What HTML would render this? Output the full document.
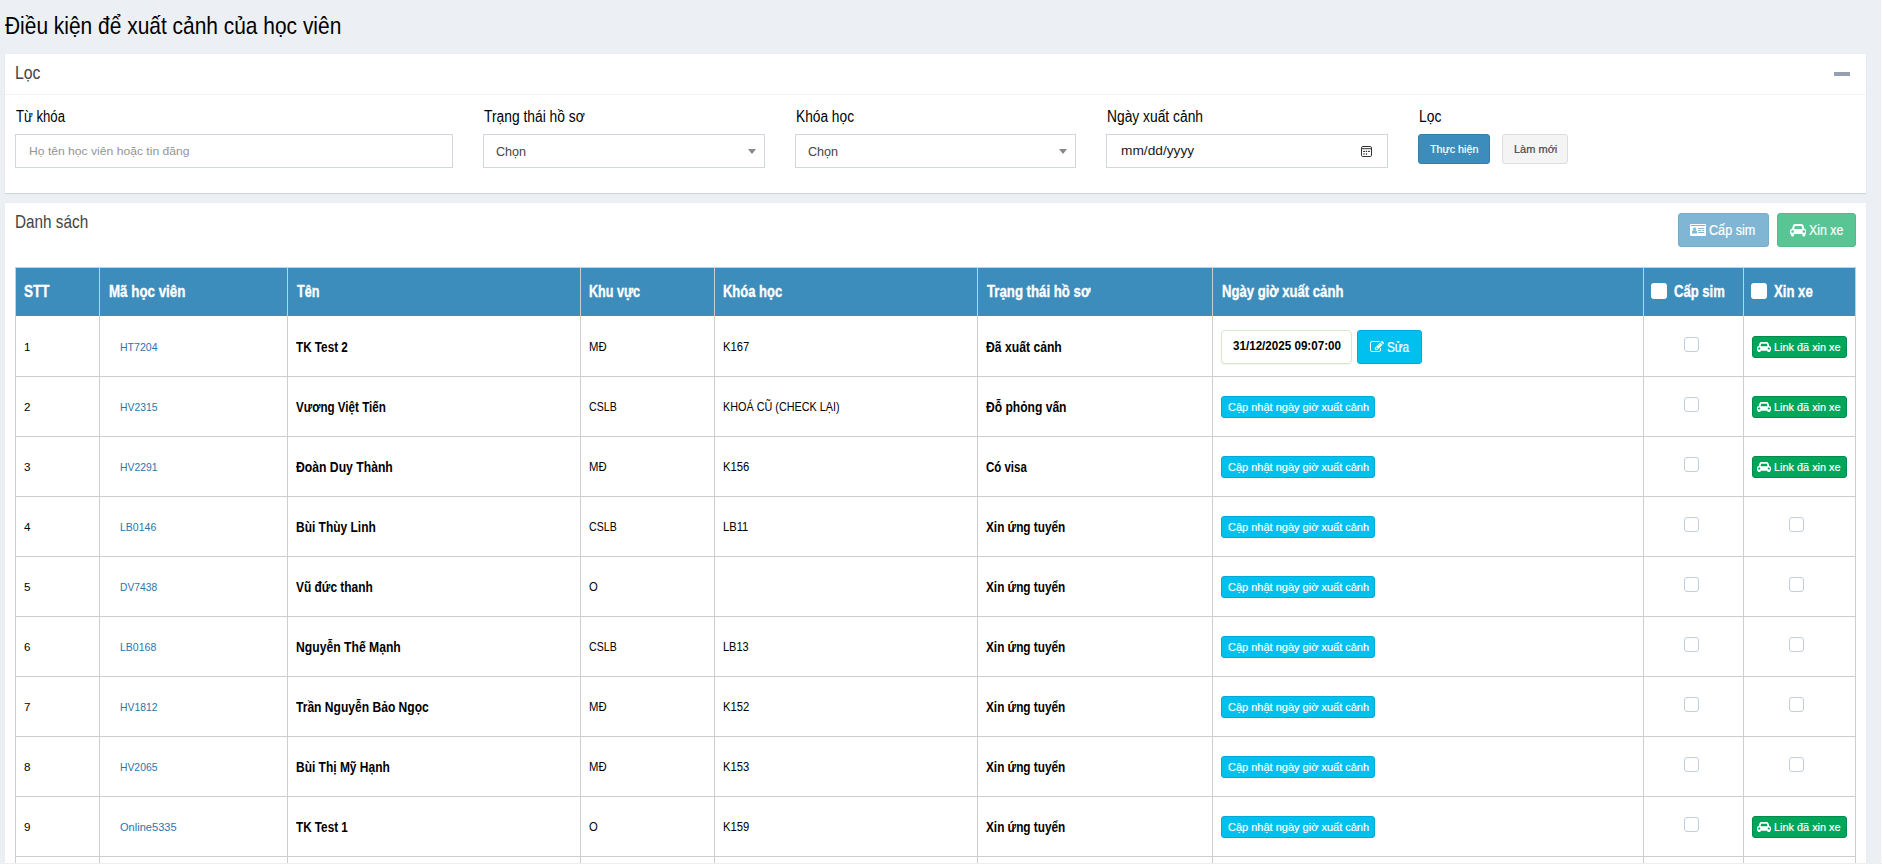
<!DOCTYPE html>
<html lang="vi"><head><meta charset="utf-8"><title>Điều kiện để xuất cảnh của học viên</title>
<style>
html,body{margin:0;padding:0}
body{width:1882px;height:864px;overflow:hidden;position:relative;background:#ecf0f5;font-family:"Liberation Sans", sans-serif}
.r{position:absolute;display:block}
.th{-webkit-text-stroke:.35px #fff}
.sb,.b14,.btn{-webkit-text-stroke:.2px currentColor}
.t{position:absolute;display:inline-block;white-space:nowrap;line-height:1;transform-origin:0 50%;font-family:"Liberation Sans", sans-serif}
</style></head>
<body>
<span id="t1" class="t h1" style="left:5.20px;top:14px;font-size:24.8px;color:#000;transform:scaleX(0.8441);">Điều kiện để xuất cảnh của học viên</span>
<div class="r" style="left:5px;top:54px;width:1861px;height:139px;background:#fff;box-shadow:0 1px 1px rgba(0,0,0,.1),0 0 1px rgba(0,0,0,.04);"></div>
<div class="r" style="left:5px;top:94px;width:1861px;height:1px;background:#f4f4f4;"></div>
<span id="t2" class="t bt" style="left:15.00px;top:64px;font-size:18.6px;color:#444;transform:scaleX(0.8504);">Lọc</span>
<div class="r" style="left:1834px;top:72px;width:16px;height:4px;background:#97a0b3;"></div>
<span id="t3" class="t lb" style="left:16.00px;top:109px;font-size:16.0px;color:#000;transform:scaleX(0.8218);">Từ khóa</span>
<span id="t4" class="t lb" style="left:484.00px;top:109px;font-size:16.0px;color:#000;transform:scaleX(0.8643);">Trạng thái hồ sơ</span>
<span id="t5" class="t lb" style="left:795.60px;top:109px;font-size:16.0px;color:#000;transform:scaleX(0.8579);">Khóa học</span>
<span id="t6" class="t lb" style="left:1107.00px;top:109px;font-size:16.0px;color:#000;transform:scaleX(0.8634);">Ngày xuất cảnh</span>
<span id="t7" class="t lb" style="left:1418.90px;top:109px;font-size:16.0px;color:#000;transform:scaleX(0.8644);">Lọc</span>
<div class="r" style="left:15px;top:134px;width:438px;height:34px;background:#fff;box-sizing:border-box;border:1px solid #d2d6de;"></div>
<div class="r" style="left:483px;top:134px;width:282px;height:34px;background:#fff;box-sizing:border-box;border:1px solid #d2d6de;"></div>
<div class="r" style="left:795px;top:134px;width:281px;height:34px;background:#fff;box-sizing:border-box;border:1px solid #d2d6de;"></div>
<div class="r" style="left:1106px;top:134px;width:282px;height:34px;background:#fff;box-sizing:border-box;border:1px solid #d2d6de;"></div>
<span id="t8" class="t ph" style="left:28.50px;top:146px;font-size:11.8px;color:#949494;transform:scaleX(1.0282);">Họ tên học viên hoặc tin đăng</span>
<span id="t9" class="t sel" style="left:496.00px;top:145px;font-size:13.4px;color:#444;transform:scaleX(0.9402);">Chọn</span>
<span id="t10" class="t sel" style="left:808.00px;top:145px;font-size:13.4px;color:#444;transform:scaleX(0.9402);">Chọn</span>
<div class="r" style="left:747.5px;top:149px;width:0;height:0;border-style:solid;border-width:5px 4.25px 0 4.25px;border-color:#888 transparent transparent transparent"></div>
<div class="r" style="left:1059px;top:149px;width:0;height:0;border-style:solid;border-width:5px 4.25px 0 4.25px;border-color:#888 transparent transparent transparent"></div>
<span id="t11" class="t dt" style="left:1120.60px;top:145px;font-size:12.4px;color:#1a1a1a;transform:scaleX(1.1060);">mm/dd/yyyy</span>
<svg class="r" style="left:1361px;top:146px" width="11" height="11" viewBox="0 0 11 11"><rect x=".5" y=".5" width="10" height="10" rx="1.3" fill="none" stroke="#333" stroke-width="1"/><rect x=".5" y="2.2" width="10" height="1" fill="#333"/><g fill="#222"><rect x="2.1" y="4.9" width="1.9" height="1"/><rect x="4.8" y="4.8" width="1.3" height="1.2"/><rect x="7" y="4.9" width="1.9" height="1"/><rect x="2.2" y="7.2" width="1.6" height="1.6" fill="#777"/><rect x="4.9" y="7.2" width="1.2" height="1.6" fill="#444"/></g></svg>
<div class="r" style="left:1418px;top:134px;width:72px;height:30px;background:#3c8dbc;box-sizing:border-box;border:1px solid #367fa9;border-radius:3px;"></div>
<span id="t12" class="t btn" style="left:1430.00px;top:144px;font-size:11.8px;color:#fff;transform:scaleX(0.9105);">Thực hiện</span>
<div class="r" style="left:1502px;top:134px;width:66px;height:30px;background:#f4f4f4;box-sizing:border-box;border:1px solid #ddd;border-radius:3px;"></div>
<span id="t13" class="t btn" style="left:1513.70px;top:144px;font-size:11.8px;color:#444;transform:scaleX(0.9327);">Làm mới</span>
<div class="r" style="left:5px;top:203px;width:1861px;height:700px;background:#fff;box-shadow:0 0 1px rgba(0,0,0,.05);"></div>
<span id="t14" class="t bt" style="left:15.30px;top:213px;font-size:18.6px;color:#444;transform:scaleX(0.8233);">Danh sách</span>
<div class="r" style="left:1678px;top:213px;width:91px;height:34px;background:#80b5d3;box-sizing:border-box;border:1px solid #78acca;border-radius:3px;"></div>
<svg class="r" style="left:1690.30px;top:224.00px" width="16.20" height="12.00" viewBox="0 -1408 2048 1536" preserveAspectRatio="none"><path transform="scale(1,-1)" fill="#fff" d="M896 324C896 251 848 192 789 192H363C304 192 256 251 256 324C256 456 288 608 420 608C460 568 515 544 576 544C637 544 692 568 732 608C864 608 896 456 896 324ZM768 768C768 662 682 576 576 576C470 576 384 662 384 768C384 874 470 960 576 960C682 960 768 874 768 768ZM1792 288C1792 270 1778 256 1760 256H1056C1038 256 1024 270 1024 288V352C1024 370 1038 384 1056 384H1760C1778 384 1792 370 1792 352V288ZM1408 544C1408 526 1394 512 1376 512H1056C1038 512 1024 526 1024 544V608C1024 626 1038 640 1056 640H1376C1394 640 1408 626 1408 608V544ZM1792 544C1792 526 1778 512 1760 512H1568C1550 512 1536 526 1536 544V608C1536 626 1550 640 1568 640H1760C1778 640 1792 626 1792 608V544ZM1792 800C1792 782 1778 768 1760 768H1056C1038 768 1024 782 1024 800V864C1024 882 1038 896 1056 896H1760C1778 896 1792 882 1792 864V800ZM128 1152V1248C128 1266 142 1280 160 1280H1888C1906 1280 1920 1266 1920 1248V1152ZM2048 1248C2048 1336 1976 1408 1888 1408H160C72 1408 0 1336 0 1248V32C0 -56 72 -128 160 -128H1888C1976 -128 2048 -56 2048 32Z"/></svg>
<span id="t15" class="t b14" style="left:1709.40px;top:223px;font-size:14.0px;color:#fff;transform:scaleX(0.9015);">Cấp sim</span>
<div class="r" style="left:1777px;top:213px;width:79px;height:34px;background:#59c594;box-sizing:border-box;border:1px solid #55b98b;border-radius:3px;"></div>
<svg class="r" style="left:1789.60px;top:224.20px" width="16.40" height="12.60" viewBox="0 -1408 2048 1600" preserveAspectRatio="none"><path transform="scale(1,-1)" fill="#fff" d="M480 448C480 360 408 288 320 288C232 288 160 360 160 448C160 536 232 608 320 608C408 608 480 536 480 448ZM516 768 605 1125C608 1136 628 1152 640 1152H1408C1420 1152 1440 1136 1443 1125L1532 768ZM1888 448C1888 360 1816 288 1728 288C1640 288 1568 360 1568 448C1568 536 1640 608 1728 608C1816 608 1888 536 1888 448ZM2048 544C2048 668 1948 768 1824 768H1796L1691 1187C1660 1313 1538 1408 1408 1408H640C510 1408 388 1313 357 1187L252 768H224C100 768 0 668 0 544V160C0 142 14 128 32 128H128V0C128 -106 214 -192 320 -192C426 -192 512 -106 512 0V128H1536V0C1536 -106 1622 -192 1728 -192C1834 -192 1920 -106 1920 0V128H2016C2034 128 2048 142 2048 160Z"/></svg>
<span id="t16" class="t b14" style="left:1808.60px;top:223px;font-size:14.0px;color:#fff;transform:scaleX(0.8838);">Xin xe</span>
<div class="r" style="left:15px;top:267px;width:1841px;height:1px;background:#cdcdcd;"></div>
<div class="r" style="left:16px;top:268px;width:1839px;height:48px;background:#3c8dbc;"></div>
<div class="r" style="left:15px;top:376px;width:1841px;height:1px;background:#cdcdcd;"></div>
<div class="r" style="left:15px;top:436px;width:1841px;height:1px;background:#cdcdcd;"></div>
<div class="r" style="left:15px;top:496px;width:1841px;height:1px;background:#cdcdcd;"></div>
<div class="r" style="left:15px;top:556px;width:1841px;height:1px;background:#cdcdcd;"></div>
<div class="r" style="left:15px;top:616px;width:1841px;height:1px;background:#cdcdcd;"></div>
<div class="r" style="left:15px;top:676px;width:1841px;height:1px;background:#cdcdcd;"></div>
<div class="r" style="left:15px;top:736px;width:1841px;height:1px;background:#cdcdcd;"></div>
<div class="r" style="left:15px;top:796px;width:1841px;height:1px;background:#cdcdcd;"></div>
<div class="r" style="left:15px;top:856px;width:1841px;height:1px;background:#cdcdcd;"></div>
<div class="r" style="left:15px;top:267px;width:1px;height:600px;background:#cdcdcd;"></div>
<div class="r" style="left:99px;top:267px;width:1px;height:600px;background:#cdcdcd;"></div>
<div class="r" style="left:287px;top:267px;width:1px;height:600px;background:#cdcdcd;"></div>
<div class="r" style="left:580px;top:267px;width:1px;height:600px;background:#cdcdcd;"></div>
<div class="r" style="left:714px;top:267px;width:1px;height:600px;background:#cdcdcd;"></div>
<div class="r" style="left:977px;top:267px;width:1px;height:600px;background:#cdcdcd;"></div>
<div class="r" style="left:1212px;top:267px;width:1px;height:600px;background:#cdcdcd;"></div>
<div class="r" style="left:1643px;top:267px;width:1px;height:600px;background:#cdcdcd;"></div>
<div class="r" style="left:1743px;top:267px;width:1px;height:600px;background:#cdcdcd;"></div>
<div class="r" style="left:1855px;top:267px;width:1px;height:600px;background:#cdcdcd;"></div>
<span id="t17" class="t th" style="left:24.00px;top:284px;font-size:15.8px;color:#fff;font-weight:bold;transform:scaleX(0.8511);">STT</span>
<span id="t18" class="t th" style="left:108.60px;top:284px;font-size:15.8px;color:#fff;font-weight:bold;transform:scaleX(0.8449);">Mã học viên</span>
<span id="t19" class="t th" style="left:296.60px;top:284px;font-size:15.8px;color:#fff;font-weight:bold;transform:scaleX(0.7973);">Tên</span>
<span id="t20" class="t th" style="left:589.40px;top:284px;font-size:15.8px;color:#fff;font-weight:bold;transform:scaleX(0.7971);">Khu vực</span>
<span id="t21" class="t th" style="left:722.90px;top:284px;font-size:15.8px;color:#fff;font-weight:bold;transform:scaleX(0.8212);">Khóa học</span>
<span id="t22" class="t th" style="left:986.50px;top:284px;font-size:15.8px;color:#fff;font-weight:bold;transform:scaleX(0.8359);">Trạng thái hồ sơ</span>
<span id="t23" class="t th" style="left:1221.70px;top:284px;font-size:15.8px;color:#fff;font-weight:bold;transform:scaleX(0.8291);">Ngày giờ xuất cảnh</span>
<span id="t24" class="t th" style="left:1673.80px;top:284px;font-size:15.8px;color:#fff;font-weight:bold;transform:scaleX(0.8266);">Cấp sim</span>
<span id="t25" class="t th" style="left:1773.80px;top:284px;font-size:15.8px;color:#fff;font-weight:bold;transform:scaleX(0.8314);">Xin xe</span>
<div class="r" style="left:1651.2px;top:283.3px;width:15.4px;height:15.5px;background:#fff;border-radius:3px;"></div>
<div class="r" style="left:1751.2px;top:283.3px;width:15.4px;height:15.5px;background:#fff;border-radius:3px;"></div>
<span id="t26" class="t tn" style="left:24.00px;top:341px;font-size:11.6px;color:#000;">1</span>
<span id="t27" class="t lk" style="left:119.60px;top:341px;font-size:11.6px;color:#2c74a8;transform:scaleX(0.9091);">HT7204</span>
<span id="t28" class="t nm" style="left:296.20px;top:340px;font-size:14.0px;color:#000;font-weight:bold;transform:scaleX(0.8357);">TK Test 2</span>
<span id="t29" class="t td" style="left:589.00px;top:341px;font-size:12.3px;color:#000;transform:scaleX(0.9203);">MĐ</span>
<span id="t30" class="t td" style="left:723.20px;top:341px;font-size:12.3px;color:#000;transform:scaleX(0.9158);">K167</span>
<span id="t31" class="t nm" style="left:986.20px;top:340px;font-size:14.0px;color:#000;font-weight:bold;transform:scaleX(0.8699);">Đã xuất cảnh</span>
<div class="r" style="left:1221px;top:330px;width:131px;height:34px;background:#fff;box-sizing:border-box;border:1px solid #d6e9c6;border-radius:4px;box-shadow:0 1px 1px rgba(0,0,0,.05);"></div>
<span id="t32" class="t dv" style="left:1232.70px;top:340px;font-size:12.4px;color:#000;font-weight:bold;transform:scaleX(0.9386);">31/12/2025 09:07:00</span>
<div class="r" style="left:1357px;top:330px;width:65px;height:34px;background:#00c0ef;box-sizing:border-box;border:1px solid #00acd6;border-radius:3px;"></div>
<svg class="r" style="left:1370.00px;top:341.00px" width="14.00" height="11.00" viewBox="0 -1408 1784 1408" preserveAspectRatio="none"><path transform="scale(1,-1)" fill="#fff" d="M888 352H832V448H736V504L852 620L1004 468ZM1328 1072C1337 1063 1336 1048 1327 1039L977 689C968 680 953 679 944 688C935 697 936 712 945 721L1295 1071C1304 1080 1319 1081 1328 1072ZM1408 478C1408 491 1400 502 1388 507C1376 512 1363 510 1353 500L1289 436C1283 430 1280 422 1280 414V288C1280 200 1208 128 1120 128H288C200 128 128 200 128 288V1120C128 1208 200 1280 288 1280H1120C1135 1280 1150 1278 1165 1274C1176 1270 1188 1273 1197 1282L1246 1331C1254 1339 1257 1349 1255 1360C1253 1370 1246 1379 1237 1383C1200 1400 1160 1408 1120 1408H288C129 1408 0 1279 0 1120V288C0 129 129 0 288 0H1120C1279 0 1408 129 1408 288ZM1312 1216 640 544V256H928L1600 928ZM1756 1084C1793 1121 1793 1183 1756 1220L1604 1372C1567 1409 1505 1409 1468 1372L1376 1280L1664 992L1756 1084Z"/></svg>
<span id="t33" class="t b14" style="left:1386.90px;top:340px;font-size:14.0px;color:#fff;transform:scaleX(0.8340);">Sửa</span>
<div class="r" style="left:1683.5px;top:336.5px;width:15px;height:15px;background:#fff;box-sizing:border-box;border:1px solid #c3cedb;border-radius:3px;"></div>
<div class="r" style="left:1752px;top:336px;width:95px;height:22px;background:#00a65a;box-sizing:border-box;border:1px solid #008d4c;border-radius:3px;"></div>
<svg class="r" style="left:1757.40px;top:341.60px" width="14.00" height="10.90" viewBox="0 -1408 2048 1600" preserveAspectRatio="none"><path transform="scale(1,-1)" fill="#fff" d="M480 448C480 360 408 288 320 288C232 288 160 360 160 448C160 536 232 608 320 608C408 608 480 536 480 448ZM516 768 605 1125C608 1136 628 1152 640 1152H1408C1420 1152 1440 1136 1443 1125L1532 768ZM1888 448C1888 360 1816 288 1728 288C1640 288 1568 360 1568 448C1568 536 1640 608 1728 608C1816 608 1888 536 1888 448ZM2048 544C2048 668 1948 768 1824 768H1796L1691 1187C1660 1313 1538 1408 1408 1408H640C510 1408 388 1313 357 1187L252 768H224C100 768 0 668 0 544V160C0 142 14 128 32 128H128V0C128 -106 214 -192 320 -192C426 -192 512 -106 512 0V128H1536V0C1536 -106 1622 -192 1728 -192C1834 -192 1920 -106 1920 0V128H2016C2034 128 2048 142 2048 160Z"/></svg>
<span id="t34" class="t sb" style="left:1774.40px;top:341px;font-size:11.6px;color:#fff;transform:scaleX(0.9393);">Link đã xin xe</span>
<span id="t35" class="t tn" style="left:24.00px;top:401px;font-size:11.6px;color:#000;">2</span>
<span id="t36" class="t lk" style="left:119.60px;top:401px;font-size:11.6px;color:#2c74a8;transform:scaleX(0.8949);">HV2315</span>
<span id="t37" class="t nm" style="left:296.20px;top:400px;font-size:14.0px;color:#000;font-weight:bold;transform:scaleX(0.8294);">Vương Việt Tiến</span>
<span id="t38" class="t td" style="left:589.00px;top:401px;font-size:12.3px;color:#000;transform:scaleX(0.8623);">CSLB</span>
<span id="t39" class="t td" style="left:723.20px;top:401px;font-size:12.3px;color:#000;transform:scaleX(0.8796);">KHOÁ CŨ (CHECK LẠI)</span>
<span id="t40" class="t nm" style="left:986.20px;top:400px;font-size:14.0px;color:#000;font-weight:bold;transform:scaleX(0.8625);">Đỗ phỏng vấn</span>
<div class="r" style="left:1221px;top:396px;width:154px;height:22px;background:#00c0ef;box-sizing:border-box;border:1px solid #00acd6;border-radius:3px;"></div>
<span id="t41" class="t sb" style="left:1228.00px;top:401px;font-size:11.6px;color:#fff;transform:scaleX(0.9485);">Cập nhật ngày giờ xuất cảnh</span>
<div class="r" style="left:1683.5px;top:396.5px;width:15px;height:15px;background:#fff;box-sizing:border-box;border:1px solid #c3cedb;border-radius:3px;"></div>
<div class="r" style="left:1752px;top:396px;width:95px;height:22px;background:#00a65a;box-sizing:border-box;border:1px solid #008d4c;border-radius:3px;"></div>
<svg class="r" style="left:1757.40px;top:401.60px" width="14.00" height="10.90" viewBox="0 -1408 2048 1600" preserveAspectRatio="none"><path transform="scale(1,-1)" fill="#fff" d="M480 448C480 360 408 288 320 288C232 288 160 360 160 448C160 536 232 608 320 608C408 608 480 536 480 448ZM516 768 605 1125C608 1136 628 1152 640 1152H1408C1420 1152 1440 1136 1443 1125L1532 768ZM1888 448C1888 360 1816 288 1728 288C1640 288 1568 360 1568 448C1568 536 1640 608 1728 608C1816 608 1888 536 1888 448ZM2048 544C2048 668 1948 768 1824 768H1796L1691 1187C1660 1313 1538 1408 1408 1408H640C510 1408 388 1313 357 1187L252 768H224C100 768 0 668 0 544V160C0 142 14 128 32 128H128V0C128 -106 214 -192 320 -192C426 -192 512 -106 512 0V128H1536V0C1536 -106 1622 -192 1728 -192C1834 -192 1920 -106 1920 0V128H2016C2034 128 2048 142 2048 160Z"/></svg>
<span id="t42" class="t sb" style="left:1774.40px;top:401px;font-size:11.6px;color:#fff;transform:scaleX(0.9393);">Link đã xin xe</span>
<span id="t43" class="t tn" style="left:24.00px;top:461px;font-size:11.6px;color:#000;">3</span>
<span id="t44" class="t lk" style="left:119.60px;top:461px;font-size:11.6px;color:#2c74a8;transform:scaleX(0.8949);">HV2291</span>
<span id="t45" class="t nm" style="left:296.20px;top:460px;font-size:14.0px;color:#000;font-weight:bold;transform:scaleX(0.8702);">Đoàn Duy Thành</span>
<span id="t46" class="t td" style="left:589.00px;top:461px;font-size:12.3px;color:#000;transform:scaleX(0.9203);">MĐ</span>
<span id="t47" class="t td" style="left:723.20px;top:461px;font-size:12.3px;color:#000;transform:scaleX(0.9158);">K156</span>
<span id="t48" class="t nm" style="left:986.20px;top:460px;font-size:14.0px;color:#000;font-weight:bold;transform:scaleX(0.8191);">Có visa</span>
<div class="r" style="left:1221px;top:456px;width:154px;height:22px;background:#00c0ef;box-sizing:border-box;border:1px solid #00acd6;border-radius:3px;"></div>
<span id="t49" class="t sb" style="left:1228.00px;top:461px;font-size:11.6px;color:#fff;transform:scaleX(0.9485);">Cập nhật ngày giờ xuất cảnh</span>
<div class="r" style="left:1683.5px;top:456.5px;width:15px;height:15px;background:#fff;box-sizing:border-box;border:1px solid #c3cedb;border-radius:3px;"></div>
<div class="r" style="left:1752px;top:456px;width:95px;height:22px;background:#00a65a;box-sizing:border-box;border:1px solid #008d4c;border-radius:3px;"></div>
<svg class="r" style="left:1757.40px;top:461.60px" width="14.00" height="10.90" viewBox="0 -1408 2048 1600" preserveAspectRatio="none"><path transform="scale(1,-1)" fill="#fff" d="M480 448C480 360 408 288 320 288C232 288 160 360 160 448C160 536 232 608 320 608C408 608 480 536 480 448ZM516 768 605 1125C608 1136 628 1152 640 1152H1408C1420 1152 1440 1136 1443 1125L1532 768ZM1888 448C1888 360 1816 288 1728 288C1640 288 1568 360 1568 448C1568 536 1640 608 1728 608C1816 608 1888 536 1888 448ZM2048 544C2048 668 1948 768 1824 768H1796L1691 1187C1660 1313 1538 1408 1408 1408H640C510 1408 388 1313 357 1187L252 768H224C100 768 0 668 0 544V160C0 142 14 128 32 128H128V0C128 -106 214 -192 320 -192C426 -192 512 -106 512 0V128H1536V0C1536 -106 1622 -192 1728 -192C1834 -192 1920 -106 1920 0V128H2016C2034 128 2048 142 2048 160Z"/></svg>
<span id="t50" class="t sb" style="left:1774.40px;top:461px;font-size:11.6px;color:#fff;transform:scaleX(0.9393);">Link đã xin xe</span>
<span id="t51" class="t tn" style="left:24.00px;top:521px;font-size:11.6px;color:#000;">4</span>
<span id="t52" class="t lk" style="left:119.60px;top:521px;font-size:11.6px;color:#2c74a8;transform:scaleX(0.9079);">LB0146</span>
<span id="t53" class="t nm" style="left:296.20px;top:520px;font-size:14.0px;color:#000;font-weight:bold;transform:scaleX(0.8550);">Bùi Thùy Linh</span>
<span id="t54" class="t td" style="left:589.00px;top:521px;font-size:12.3px;color:#000;transform:scaleX(0.8623);">CSLB</span>
<span id="t55" class="t td" style="left:723.20px;top:521px;font-size:12.3px;color:#000;transform:scaleX(0.9097);">LB11</span>
<span id="t56" class="t nm" style="left:986.20px;top:520px;font-size:14.0px;color:#000;font-weight:bold;transform:scaleX(0.8424);">Xin ứng tuyển</span>
<div class="r" style="left:1221px;top:516px;width:154px;height:22px;background:#00c0ef;box-sizing:border-box;border:1px solid #00acd6;border-radius:3px;"></div>
<span id="t57" class="t sb" style="left:1228.00px;top:521px;font-size:11.6px;color:#fff;transform:scaleX(0.9485);">Cập nhật ngày giờ xuất cảnh</span>
<div class="r" style="left:1683.5px;top:516.5px;width:15px;height:15px;background:#fff;box-sizing:border-box;border:1px solid #c3cedb;border-radius:3px;"></div>
<div class="r" style="left:1789.3px;top:516.5px;width:15px;height:15px;background:#fff;box-sizing:border-box;border:1px solid #c3cedb;border-radius:3px;"></div>
<span id="t58" class="t tn" style="left:24.00px;top:581px;font-size:11.6px;color:#000;">5</span>
<span id="t59" class="t lk" style="left:119.60px;top:581px;font-size:11.6px;color:#2c74a8;transform:scaleX(0.8853);">DV7438</span>
<span id="t60" class="t nm" style="left:296.20px;top:580px;font-size:14.0px;color:#000;font-weight:bold;transform:scaleX(0.8510);">Vũ đức thanh</span>
<span id="t61" class="t td" style="left:589.00px;top:581px;font-size:12.3px;color:#000;transform:scaleX(0.9158);">O</span>
<span id="t62" class="t nm" style="left:986.20px;top:580px;font-size:14.0px;color:#000;font-weight:bold;transform:scaleX(0.8424);">Xin ứng tuyển</span>
<div class="r" style="left:1221px;top:576px;width:154px;height:22px;background:#00c0ef;box-sizing:border-box;border:1px solid #00acd6;border-radius:3px;"></div>
<span id="t63" class="t sb" style="left:1228.00px;top:581px;font-size:11.6px;color:#fff;transform:scaleX(0.9485);">Cập nhật ngày giờ xuất cảnh</span>
<div class="r" style="left:1683.5px;top:576.5px;width:15px;height:15px;background:#fff;box-sizing:border-box;border:1px solid #c3cedb;border-radius:3px;"></div>
<div class="r" style="left:1789.3px;top:576.5px;width:15px;height:15px;background:#fff;box-sizing:border-box;border:1px solid #c3cedb;border-radius:3px;"></div>
<span id="t64" class="t tn" style="left:24.00px;top:641px;font-size:11.6px;color:#000;">6</span>
<span id="t65" class="t lk" style="left:119.60px;top:641px;font-size:11.6px;color:#2c74a8;transform:scaleX(0.9079);">LB0168</span>
<span id="t66" class="t nm" style="left:296.20px;top:640px;font-size:14.0px;color:#000;font-weight:bold;transform:scaleX(0.8693);">Nguyễn Thế Mạnh</span>
<span id="t67" class="t td" style="left:589.00px;top:641px;font-size:12.3px;color:#000;transform:scaleX(0.8623);">CSLB</span>
<span id="t68" class="t td" style="left:723.20px;top:641px;font-size:12.3px;color:#000;transform:scaleX(0.8914);">LB13</span>
<span id="t69" class="t nm" style="left:986.20px;top:640px;font-size:14.0px;color:#000;font-weight:bold;transform:scaleX(0.8424);">Xin ứng tuyển</span>
<div class="r" style="left:1221px;top:636px;width:154px;height:22px;background:#00c0ef;box-sizing:border-box;border:1px solid #00acd6;border-radius:3px;"></div>
<span id="t70" class="t sb" style="left:1228.00px;top:641px;font-size:11.6px;color:#fff;transform:scaleX(0.9485);">Cập nhật ngày giờ xuất cảnh</span>
<div class="r" style="left:1683.5px;top:636.5px;width:15px;height:15px;background:#fff;box-sizing:border-box;border:1px solid #c3cedb;border-radius:3px;"></div>
<div class="r" style="left:1789.3px;top:636.5px;width:15px;height:15px;background:#fff;box-sizing:border-box;border:1px solid #c3cedb;border-radius:3px;"></div>
<span id="t71" class="t tn" style="left:24.00px;top:701px;font-size:11.6px;color:#000;">7</span>
<span id="t72" class="t lk" style="left:119.60px;top:701px;font-size:11.6px;color:#2c74a8;transform:scaleX(0.8949);">HV1812</span>
<span id="t73" class="t nm" style="left:296.20px;top:700px;font-size:14.0px;color:#000;font-weight:bold;transform:scaleX(0.8622);">Trần Nguyễn Bảo Ngọc</span>
<span id="t74" class="t td" style="left:589.00px;top:701px;font-size:12.3px;color:#000;transform:scaleX(0.9203);">MĐ</span>
<span id="t75" class="t td" style="left:723.20px;top:701px;font-size:12.3px;color:#000;transform:scaleX(0.9158);">K152</span>
<span id="t76" class="t nm" style="left:986.20px;top:700px;font-size:14.0px;color:#000;font-weight:bold;transform:scaleX(0.8424);">Xin ứng tuyển</span>
<div class="r" style="left:1221px;top:696px;width:154px;height:22px;background:#00c0ef;box-sizing:border-box;border:1px solid #00acd6;border-radius:3px;"></div>
<span id="t77" class="t sb" style="left:1228.00px;top:701px;font-size:11.6px;color:#fff;transform:scaleX(0.9485);">Cập nhật ngày giờ xuất cảnh</span>
<div class="r" style="left:1683.5px;top:696.5px;width:15px;height:15px;background:#fff;box-sizing:border-box;border:1px solid #c3cedb;border-radius:3px;"></div>
<div class="r" style="left:1789.3px;top:696.5px;width:15px;height:15px;background:#fff;box-sizing:border-box;border:1px solid #c3cedb;border-radius:3px;"></div>
<span id="t78" class="t tn" style="left:24.00px;top:761px;font-size:11.6px;color:#000;">8</span>
<span id="t79" class="t lk" style="left:119.60px;top:761px;font-size:11.6px;color:#2c74a8;transform:scaleX(0.8925);">HV2065</span>
<span id="t80" class="t nm" style="left:296.20px;top:760px;font-size:14.0px;color:#000;font-weight:bold;transform:scaleX(0.8553);">Bùi Thị Mỹ Hạnh</span>
<span id="t81" class="t td" style="left:589.00px;top:761px;font-size:12.3px;color:#000;transform:scaleX(0.9203);">MĐ</span>
<span id="t82" class="t td" style="left:723.20px;top:761px;font-size:12.3px;color:#000;transform:scaleX(0.9158);">K153</span>
<span id="t83" class="t nm" style="left:986.20px;top:760px;font-size:14.0px;color:#000;font-weight:bold;transform:scaleX(0.8424);">Xin ứng tuyển</span>
<div class="r" style="left:1221px;top:756px;width:154px;height:22px;background:#00c0ef;box-sizing:border-box;border:1px solid #00acd6;border-radius:3px;"></div>
<span id="t84" class="t sb" style="left:1228.00px;top:761px;font-size:11.6px;color:#fff;transform:scaleX(0.9485);">Cập nhật ngày giờ xuất cảnh</span>
<div class="r" style="left:1683.5px;top:756.5px;width:15px;height:15px;background:#fff;box-sizing:border-box;border:1px solid #c3cedb;border-radius:3px;"></div>
<div class="r" style="left:1789.3px;top:756.5px;width:15px;height:15px;background:#fff;box-sizing:border-box;border:1px solid #c3cedb;border-radius:3px;"></div>
<span id="t85" class="t tn" style="left:24.00px;top:821px;font-size:11.6px;color:#000;">9</span>
<span id="t86" class="t lk" style="left:119.60px;top:821px;font-size:11.6px;color:#2c74a8;transform:scaleX(0.9543);">Online5335</span>
<span id="t87" class="t nm" style="left:296.20px;top:820px;font-size:14.0px;color:#000;font-weight:bold;transform:scaleX(0.8357);">TK Test 1</span>
<span id="t88" class="t td" style="left:589.00px;top:821px;font-size:12.3px;color:#000;transform:scaleX(0.9158);">O</span>
<span id="t89" class="t td" style="left:723.20px;top:821px;font-size:12.3px;color:#000;transform:scaleX(0.9158);">K159</span>
<span id="t90" class="t nm" style="left:986.20px;top:820px;font-size:14.0px;color:#000;font-weight:bold;transform:scaleX(0.8424);">Xin ứng tuyển</span>
<div class="r" style="left:1221px;top:816px;width:154px;height:22px;background:#00c0ef;box-sizing:border-box;border:1px solid #00acd6;border-radius:3px;"></div>
<span id="t91" class="t sb" style="left:1228.00px;top:821px;font-size:11.6px;color:#fff;transform:scaleX(0.9485);">Cập nhật ngày giờ xuất cảnh</span>
<div class="r" style="left:1683.5px;top:816.5px;width:15px;height:15px;background:#fff;box-sizing:border-box;border:1px solid #c3cedb;border-radius:3px;"></div>
<div class="r" style="left:1752px;top:816px;width:95px;height:22px;background:#00a65a;box-sizing:border-box;border:1px solid #008d4c;border-radius:3px;"></div>
<svg class="r" style="left:1757.40px;top:821.60px" width="14.00" height="10.90" viewBox="0 -1408 2048 1600" preserveAspectRatio="none"><path transform="scale(1,-1)" fill="#fff" d="M480 448C480 360 408 288 320 288C232 288 160 360 160 448C160 536 232 608 320 608C408 608 480 536 480 448ZM516 768 605 1125C608 1136 628 1152 640 1152H1408C1420 1152 1440 1136 1443 1125L1532 768ZM1888 448C1888 360 1816 288 1728 288C1640 288 1568 360 1568 448C1568 536 1640 608 1728 608C1816 608 1888 536 1888 448ZM2048 544C2048 668 1948 768 1824 768H1796L1691 1187C1660 1313 1538 1408 1408 1408H640C510 1408 388 1313 357 1187L252 768H224C100 768 0 668 0 544V160C0 142 14 128 32 128H128V0C128 -106 214 -192 320 -192C426 -192 512 -106 512 0V128H1536V0C1536 -106 1622 -192 1728 -192C1834 -192 1920 -106 1920 0V128H2016C2034 128 2048 142 2048 160Z"/></svg>
<span id="t92" class="t sb" style="left:1774.40px;top:821px;font-size:11.6px;color:#fff;transform:scaleX(0.9393);">Link đã xin xe</span>
<div class="r" style="left:1881px;top:0px;width:1px;height:864px;background:#fbfbfb;"></div>
<div class="r" style="left:0px;top:863px;width:1882px;height:1px;background:#eeeeee;"></div>
</body></html>
